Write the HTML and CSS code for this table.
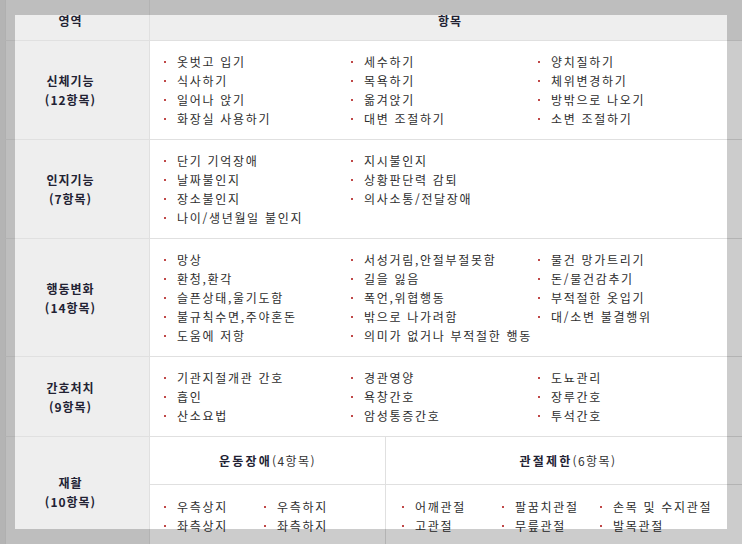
FILE: index.html
```html
<!DOCTYPE html>
<html lang="ko">
<head>
<meta charset="utf-8">
<link rel="stylesheet" href="styles.css">
</head>
<body>
<div class="page">
  <table class="eval">
    <thead>
      <tr><th class="area">영역</th><th class="items-h">항목</th></tr>
    </thead>
    <tbody>
      <tr>
        <th class="area">신체기능<br>(12항목)</th>
        <td class="cell">
          <div class="cols">
            <ul><li>옷벗고 입기</li><li>식사하기</li><li>일어나 앉기</li><li>화장실 사용하기</li></ul>
            <ul><li>세수하기</li><li>목욕하기</li><li>옮겨앉기</li><li>대변 조절하기</li></ul>
            <ul><li>양치질하기</li><li>체위변경하기</li><li>방밖으로 나오기</li><li>소변 조절하기</li></ul>
          </div>
        </td>
      </tr>
      <tr>
        <th class="area">인지기능<br>(7항목)</th>
        <td class="cell">
          <div class="cols">
            <ul><li>단기 기억장애</li><li>날짜불인지</li><li>장소불인지</li><li>나이/생년월일 불인지</li></ul>
            <ul><li>지시불인지</li><li>상황판단력 감퇴</li><li>의사소통/전달장애</li></ul>
            <ul></ul>
          </div>
        </td>
      </tr>
      <tr>
        <th class="area">행동변화<br>(14항목)</th>
        <td class="cell">
          <div class="cols">
            <ul><li>망상</li><li>환청,환각</li><li>슬픈상태,울기도함</li><li>불규칙수면,주야혼돈</li><li>도움에 저항</li></ul>
            <ul><li>서성거림,안절부절못함</li><li>길을 잃음</li><li>폭언,위협행동</li><li>밖으로 나가려함</li><li>의미가 없거나 부적절한 행동</li></ul>
            <ul><li>물건 망가트리기</li><li>돈/물건감추기</li><li>부적절한 옷입기</li><li>대/소변 불결행위</li></ul>
          </div>
        </td>
      </tr>
      <tr>
        <th class="area">간호처치<br>(9항목)</th>
        <td class="cell">
          <div class="cols">
            <ul><li>기관지절개관 간호</li><li>흡인</li><li>산소요법</li></ul>
            <ul><li>경관영양</li><li>욕창간호</li><li>암성통증간호</li></ul>
            <ul><li>도뇨관리</li><li>장루간호</li><li>투석간호</li></ul>
          </div>
        </td>
      </tr>
      <tr>
        <th class="area">재활<br>(10항목)</th>
        <td class="cell sub">
          <div class="subgrid">
            <div class="subhead left"><b>운동장애</b>(4항목)</div>
            <div class="subhead"><b>관절제한</b>(6항목)</div>
            <div class="subbody left">
              <div class="cols small">
                <ul><li>우측상지</li><li>좌측상지</li></ul>
                <ul><li>우측하지</li><li>좌측하지</li></ul>
              </div>
            </div>
            <div class="subbody right">
              <div class="cols small">
                <ul><li>어깨관절</li><li>고관절</li></ul>
                <ul class="narrow"><li>팔꿈치관절</li><li>무릎관절</li></ul>
                <ul><li>손목 및 수지관절</li><li>발목관절</li></ul>
              </div>
            </div>
          </div>
        </td>
      </tr>
    </tbody>
  </table>
  <div class="focus"></div>
</div>
</body>
</html>
```

FILE: styles.css
```css
html, body {
  margin: 0;
  padding: 0;
}
body {
  width: 742px;
  height: 544px;
  overflow: hidden;
  background: #e2e2e2;
  font-family: "Noto Sans CJK KR", "Noto Sans", sans-serif;
  font-size: 12px;
  color: #2e2e2e;
}
.page {
  position: relative;
  width: 742px;
  height: 544px;
  padding-left: 5px;
  box-sizing: border-box;
}
.eval {
  border-collapse: collapse;
  width: 745px;
  table-layout: fixed;
  background: #fff;
  border-left: 1px solid #dcdcdc;
}
.eval th, .eval td {
  border-bottom: 1px solid #e0e0e0;
  padding: 0;
  vertical-align: middle;
}
thead th {
  height: 40px;
  background: #eeeeee;
  font-weight: bold;
  color: #222233;
  text-align: center;
  line-height: 19px;
  letter-spacing: 1px;
}
.eval th.area {
  width: 129px;
  background: #eeeeee;
  border-right: 1px solid #e0e0e0;
  text-align: center;
  font-weight: bold;
  color: #222233;
  line-height: 19px;
  letter-spacing: 1px;
  padding-right: 14px;
}
.cell {
  padding: 11px 10px 11px 10px !important;
}
.cell.sub {
  padding: 0 !important;
}
.cols {
  display: flex;
}
.cols ul {
  list-style: none;
  margin: 0;
  padding: 0;
  width: 187px;
}
.cols.small ul {
  width: 100px;
}
.cols.small ul.narrow {
  width: 98px;
}
.cols li {
  display: flex;
  align-items: center;
  line-height: 19px;
  height: 19px;
  white-space: nowrap;
  letter-spacing: 1.7px;
}
.cols li::before {
  content: "";
  display: inline-block;
  width: 2px;
  height: 2px;
  background: #c04848;
  margin: 1px 11px 0 4px;
  flex: none;
}
.subgrid {
  display: grid;
  grid-template-columns: 236px 1fr;
}
.subhead {
  height: 47px;
  display: flex;
  align-items: center;
  justify-content: center;
  border-bottom: 1px solid #e0e0e0;
  color: #333;
  letter-spacing: 1.4px;
}
.subhead b {
  color: #222233;
  letter-spacing: 2.2px;
}
.subhead.left, .subbody.left {
  border-right: 1px solid #e0e0e0;
}
.subbody {
  padding: 12px 10px 12px 10px;
}
.subbody.right {
  padding-left: 12px;
}
.focus {
  position: absolute;
  left: 15px;
  top: 15px;
  width: 712px;
  height: 514px;
  box-shadow: 0 0 0 2000px rgba(0, 0, 0, 0.2);
  pointer-events: none;
}
```
